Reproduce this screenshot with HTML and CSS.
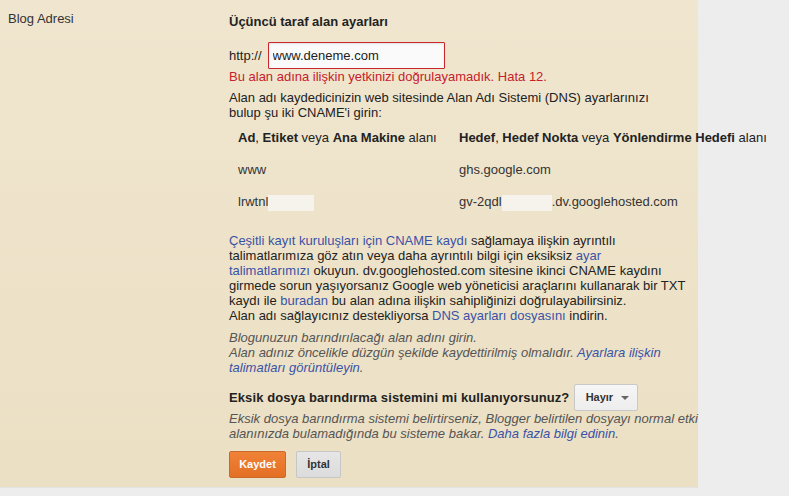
FILE: index.html
```html
<!DOCTYPE html>
<html lang="tr">
<head>
    <meta charset="UTF-8">
    <title>Blog Adresi</title>
    <link rel="stylesheet" href="styles.css">
</head>
<body>
    <div class="panel">
        <div class="label">Blog Adresi</div>

        <div class="settings">
            <h3 class="title">Üçüncü taraf alan ayarları</h3>

            <div class="url-row">
                <span>http://</span>
                <input class="url-input" type="text" value="www.deneme.com">
            </div>
            <div class="error">Bu alan adına ilişkin yetkinizi doğrulayamadık. Hata 12.</div>

            <p class="info">
                Alan adı kaydedicinizin web sitesinde Alan Adı Sistemi (DNS) ayarlarınızı<br>
                bulup şu iki CNAME'i girin:
            </p>

            <table class="cname">
                <tr>
                    <th><b>Ad</b>, <b>Etiket</b> veya <b>Ana Makine</b> alanı</th>
                    <th><b>Hedef</b>, <b>Hedef Nokta</b> veya <b>Yönlendirme Hedefi</b> alanı</th>
                </tr>
                <tr>
                    <td>www</td>
                    <td>ghs.google.com</td>
                </tr>
                <tr>
                    <td>lrwtnl<span class="hidden w46"></span></td>
                    <td>gv-2qdl<span class="hidden w50"></span>.dv.googlehosted.com</td>
                </tr>
            </table>

            <p class="info">
                <a href="#">Çeşitli kayıt kuruluşları için CNAME kaydı</a> sağlamaya ilişkin ayrıntılı<br>
                talimatlarımıza göz atın veya daha ayrıntılı bilgi için eksiksiz <a href="#">ayar</a><br>
                <a href="#">talimatlarımızı</a> okuyun. dv.googlehosted.com sitesine ikinci CNAME kaydını<br>
                girmede sorun yaşıyorsanız Google web yöneticisi araçlarını kullanarak bir TXT<br>
                kaydı ile <a href="#">buradan</a> bu alan adına ilişkin sahipliğinizi doğrulayabilirsiniz.<br>
                Alan adı sağlayıcınız destekliyorsa <a href="#">DNS ayarları dosyasını</a> indirin.
            </p>

            <p class="hint">
                Blogunuzun barındırılacağı alan adını girin.<br>
                Alan adınız öncelikle düzgün şekilde kaydettirilmiş olmalıdır. <a href="#">Ayarlara ilişkin</a><br>
                <a href="#">talimatları görüntüleyin</a>.
            </p>

            <div class="fallback-row">
                <span class="question">Eksik dosya barındırma sistemini mi kullanıyorsunuz?</span>
                <button class="dropdown">Hayır <span class="caret"></span></button>
            </div>

            <p class="hint">
                Eksik dosya barındırma sistemi belirtirseniz, Blogger belirtilen dosyayı normal etki<br>
                alanınızda bulamadığında bu sisteme bakar. <a href="#">Daha fazla bilgi edinin</a>.
            </p>

            <div class="actions">
                <button class="btn btn-save">Kaydet</button>
                <button class="btn btn-cancel">İptal</button>
            </div>
        </div>
    </div>
</body>
</html>
```

FILE: styles.css
```css
body {
    margin: 0;
    background: #ededed;
    font-family: "Liberation Sans", Arial, sans-serif;
    font-size: 13px;
    color: #222;
    height: 496px;
    overflow: hidden;
}

.panel {
    width: 698px;
    height: 488px;
    box-sizing: border-box;
    display: flex;
    background: linear-gradient(#f0e6cf, #ebe0c4);
    border-bottom: 1px solid #e4e4e4;
}

.label {
    width: 229px;
    flex-shrink: 0;
    box-sizing: border-box;
    padding: 11px 0 0 8px;
    line-height: 15px;
    color: #333;
}

.settings {
    padding-top: 14px;
    white-space: nowrap;
}

.title {
    margin: 0 0 12px;
    font-size: 13px;
    line-height: 16px;
    font-weight: bold;
    color: #222;
}

.url-row {
    display: flex;
    align-items: center;
    gap: 6px;
    height: 27px;
}

.url-input {
    width: 177px;
    height: 27px;
    box-sizing: border-box;
    margin: 0;
    padding: 0 4px;
    border: 1px solid #c9262c;
    border-radius: 1px;
    background: #fafafa;
    box-shadow: inset 0 1px 2px rgba(0, 0, 0, 0.1);
    font-family: inherit;
    font-size: 13px;
    color: #222;
}

.error {
    line-height: 15px;
    color: #c8202b;
}

.info {
    margin: 6px 0 0;
    line-height: 15px;
}

.info a,
.hint a {
    color: #3a52a6;
    text-decoration: none;
}

.cname {
    margin: 2px 0 0 9px;
    border-collapse: collapse;
    table-layout: fixed;
    width: 530px;
}

.cname th,
.cname td {
    padding: 8px 0;
    line-height: 16px;
    text-align: left;
    vertical-align: middle;
    font-weight: normal;
    overflow: visible;
}

.cname th:first-child {
    width: 221px;
}

.cname td {
    color: #333;
}

.hidden {
    display: inline-block;
    height: 16px;
    vertical-align: middle;
    background: #f6f3ec;
}

.w46 { width: 46px; }
.w50 { width: 50px; }

.cname + .info {
    margin-top: 14px;
}

.hint {
    margin: 7px 0 0;
    line-height: 15px;
    font-style: italic;
    color: #555;
}

.fallback-row {
    display: flex;
    align-items: center;
    gap: 5px;
    margin-top: 9px;
    height: 27px;
}

.question {
    font-size: 13px;
    font-weight: bold;
    letter-spacing: 0.1px;
    color: #222;
}

.dropdown {
    width: 64px;
    height: 27px;
    padding: 0 0 0 2px;
    border: 1px solid #c8c8c8;
    border-radius: 2px;
    background: linear-gradient(#f6f6f6, #ededed);
    font-family: inherit;
    font-size: 11px;
    font-weight: bold;
    color: #333;
}

.caret {
    display: inline-block;
    margin-left: 5px;
    vertical-align: middle;
    border-left: 4px solid transparent;
    border-right: 4px solid transparent;
    border-top: 4px solid #666;
}

.fallback-row + .hint {
    margin-top: 0;
}

.actions {
    display: flex;
    gap: 10px;
    margin-top: 10px;
}

.btn {
    height: 27px;
    border-radius: 2px;
    font-family: inherit;
    font-size: 11px;
    font-weight: bold;
    padding: 0;
}

.btn-save {
    width: 57px;
    border: 1px solid #c96a2c;
    background: linear-gradient(#f08238, #e36f24);
    color: #fff;
}

.btn-cancel {
    width: 45px;
    border: 1px solid #c6c6c6;
    background: linear-gradient(#e6e6e6, #dcdcdc);
    color: #333;
}
```
